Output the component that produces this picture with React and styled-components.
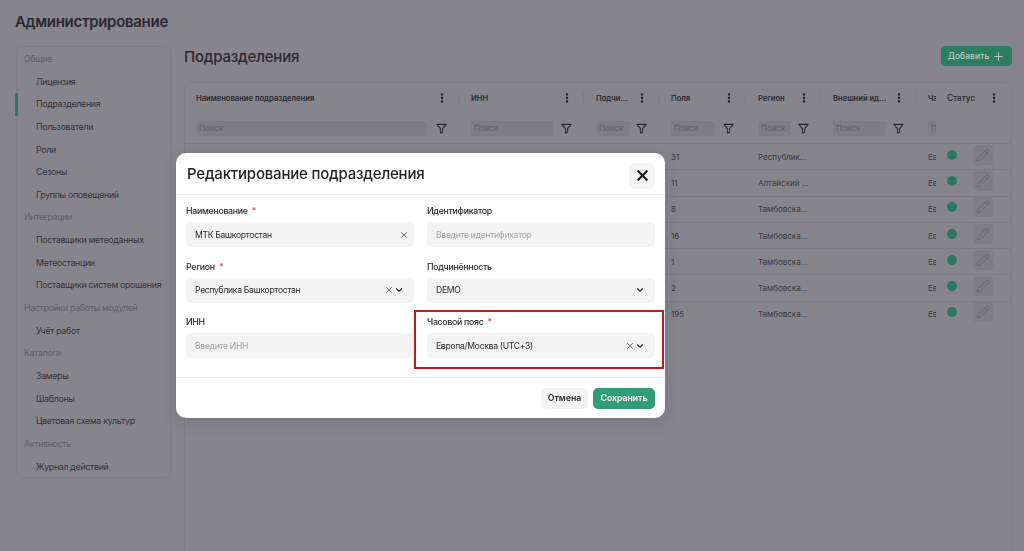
import styled, { createGlobalStyle } from "styled-components";
import { X, ChevronDown, Plus, Pencil, EllipsisVertical } from "lucide-react";

const GlobalStyle = createGlobalStyle`
  html, body { margin: 0; padding: 0; height: 100%; background: #fff; overflow: hidden; }
  body { font-family: Inter, "Noto Sans", sans-serif; color: #444448; }
  * { box-sizing: border-box; }
`;

const menu = [
  { title: "Общие", items: ["Лицензия", "Подразделения", "Пользователи", "Роли", "Сезоны", "Группы оповещений"] },
  { title: "Интеграции", items: ["Поставщики метеоданных", "Метеостанции", "Поставщики систем орошения"] },
  { title: "Настройки работы модулей", items: ["Учёт работ"] },
  { title: "Каталоги", items: ["Замеры", "Шаблоны", "Цветовая схема культур"] },
  { title: "Активность", items: ["Журнал действий"] },
];

const columns = [
  { name: "Наименование подразделения", width: 274, input: 231, first: true },
  { name: "ИНН", width: 125, input: 82 },
  { name: "Подчи...", width: 75, input: 33 },
  { name: "Поля", width: 87, input: 44 },
  { name: "Регион", width: 75, input: 32 },
  { name: "Внешний ид...", width: 95, input: 52 },
];

const rows = [
  ["31", "Республик..."],
  ["11", "Алтайский ..."],
  ["8", "Тамбовска..."],
  ["16", "Тамбовска..."],
  ["1", "Тамбовска..."],
  ["2", "Тамбовска..."],
  ["195", "Тамбовска..."],
];

const FilterIcon = () => (
  <svg width="11" height="11" viewBox="0 0 12 12" fill="none" stroke="#3a3a3e" strokeWidth="1.1" strokeLinejoin="round">
    <path d="M1 1.5h10L7.2 6.2v3.9L4.8 11V6.2z" />
  </svg>
);

const App = () => {
  return (
    <>
      <GlobalStyle />
      <Page>
        <PageTitle>Администрирование</PageTitle>
        <Columns>
          <Sidebar>
            {menu.map((group) => (
              <div key={group.title}>
                <GroupTitle>{group.title}</GroupTitle>
                {group.items.map((item) => (
                  <MenuItem key={item} $active={item === "Подразделения"}>
                    {item}
                  </MenuItem>
                ))}
              </div>
            ))}
          </Sidebar>
          <Main>
            <MainHeader>
              <MainTitle>Подразделения</MainTitle>
              <AddButton>
                Добавить <Plus size={13} strokeWidth={1.8} />
              </AddButton>
            </MainHeader>
            <TableCard>
              <HeadRow>
                {columns.map((col) => (
                  <HeadCell key={col.name} $width={col.width} $first={col.first}>
                    <HeadName>{col.name}</HeadName>
                    <Dots size={12} strokeWidth={2.8} />
                  </HeadCell>
                ))}
                <ClippedHead>Ча</ClippedHead>
                <StatusHead>
                  Статус
                  <Dots size={12} strokeWidth={2.8} />
                </StatusHead>
              </HeadRow>
              <FilterRow>
                {columns.map((col) => (
                  <FilterCell key={col.name} $width={col.width} $first={col.first}>
                    <SearchBox $width={col.input}>Поиск</SearchBox>
                    <FilterIcon />
                  </FilterCell>
                ))}
                <ClippedFilter>
                  <SearchBox $width={8}>П</SearchBox>
                </ClippedFilter>
              </FilterRow>
              {rows.map((row, i) => (
                <Row key={i}>
                  <RowSpacer />
                  <FieldsCell>{row[0]}</FieldsCell>
                  <RegionCell>{row[1]}</RegionCell>
                  <ClippedCell>Ев</ClippedCell>
                  <StatusCell>
                    <Dot />
                    <EditButton>
                      <Pencil size={14} strokeWidth={1} />
                    </EditButton>
                  </StatusCell>
                </Row>
              ))}
            </TableCard>
          </Main>
        </Columns>
      </Page>

      <Overlay>
        <Modal>
          <ModalHeader>
            <ModalTitle>Редактирование подразделения</ModalTitle>
            <CloseButton>
              <X size={17} strokeWidth={3} />
            </CloseButton>
          </ModalHeader>
          <Form>
            <Field>
              <Label>
                Наименование <Star>*</Star>
              </Label>
              <Control>
                <Value>МТК Башкортостан</Value>
                <ClearIcon size={10} strokeWidth={1.6} $alone />
              </Control>
            </Field>
            <Field>
              <Label>Идентификатор</Label>
              <Control>
                <Value $placeholder>Введите идентификатор</Value>
              </Control>
            </Field>
            <Field>
              <Label>
                Регион <Star>*</Star>
              </Label>
              <Control>
                <Value>Республика Башкортостан</Value>
                <ClearIcon size={10} strokeWidth={1.6} />
                <ChevronDown size={10} strokeWidth={2.6} />
              </Control>
            </Field>
            <Field>
              <Label>Подчинённость</Label>
              <Control>
                <Value>DEMO</Value>
                <ChevronDown size={10} strokeWidth={2.6} />
              </Control>
            </Field>
            <Field>
              <Label>ИНН</Label>
              <Control>
                <Value $placeholder>Введите ИНН</Value>
              </Control>
            </Field>
            <Field>
              <Label>
                Часовой пояс <Star>*</Star>
              </Label>
              <Control>
                <Value>Европа/Москва (UTC+3)</Value>
                <ClearIcon size={10} strokeWidth={1.6} />
                <ChevronDown size={10} strokeWidth={2.6} />
              </Control>
              <Highlight />
            </Field>
          </Form>
          <ModalFooter>
            <CancelButton>Отмена</CancelButton>
            <SaveButton>Сохранить</SaveButton>
          </ModalFooter>
        </Modal>
      </Overlay>
    </>
  );
};

const Page = styled.div`
  width: 1024px;
  height: 551px;
  padding: 12px 12px 0 16px;
  background: #fff;
  overflow: hidden;
`;
const PageTitle = styled.h1`
  margin: 0 0 15px -1px;
  font-size: 15px;
  line-height: 19px;
  font-weight: 600;
  letter-spacing: -0.3px;
`;
const Columns = styled.div`
  display: flex;
  gap: 13px;
`;
const Sidebar = styled.aside`
  width: 155px;
  height: 432px;
  padding: 1px 0 0;
  border: 1px solid #f0f0f1;
  border-radius: 6px;
  flex-shrink: 0;
`;
const GroupTitle = styled.div`
  height: 22.65px;
  line-height: 22.65px;
  padding-left: 7px;
  font-size: 8.8px;
  letter-spacing: -0.3px;
  color: #b0b0b4;
`;
const MenuItem = styled.div`
  position: relative;
  height: 22.65px;
  line-height: 22.65px;
  padding-left: 19px;
  font-size: 8.8px;
  letter-spacing: -0.3px;
  color: #58585c;
  white-space: nowrap;
  &::before {
    content: "";
    display: ${({ $active }) => ($active ? "block" : "none")};
    position: absolute;
    left: -2px;
    top: 0;
    width: 3px;
    height: 100%;
    background: #45e5a2;
  }
`;
const Main = styled.main`
  flex: 1;
  min-width: 0;
`;
const MainHeader = styled.div`
  display: flex;
  justify-content: space-between;
  align-items: flex-start;
  height: 36px;
`;
const MainTitle = styled.h2`
  margin: 0;
  font-size: 15px;
  line-height: 21px;
  font-weight: 500;
  letter-spacing: -0.2px;
`;
const AddButton = styled.button`
  position: relative;
  z-index: 2;
  display: flex;
  align-items: center;
  justify-content: center;
  gap: 3px;
  width: 71px;
  height: 20px;
  padding: 0;
  border: 0;
  border-radius: 4px;
  background: #2d7d60;
  color: #b7cbc2;
  font: 500 8.6px Inter, sans-serif;
`;
const TableCard = styled.section`
  height: 480px;
  border: 1px solid #f0f0f1;
  border-radius: 6px;
  overflow: hidden;
`;
const HeadRow = styled.div`
  display: flex;
  align-items: center;
  height: 30px;
`;
const HeadCell = styled.div`
  display: flex;
  align-items: center;
  justify-content: space-between;
  flex-shrink: 0;
  width: ${({ $width }) => $width}px;
  padding: 0 10.5px 0 ${({ $first }) => ($first ? 11 : 12)}px;
  height: 10px;
  border-right: 1px solid #eeeeef;
`;
const HeadName = styled.span`
  font-size: 7.6px;
  font-weight: 600;
  white-space: nowrap;
`;
const Dots = styled(EllipsisVertical)`
  color: #2a2a2e;
  flex-shrink: 0;
`;
const ClippedHead = styled.div`
  width: 20px;
  padding-left: 12px;
  font-size: 7.6px;
  font-weight: 600;
  overflow: hidden;
  flex-shrink: 0;
`;
const StatusHead = styled.div`
  display: flex;
  align-items: center;
  justify-content: space-between;
  flex: 1;
  padding: 0 11px 0 11px;
  font-size: 8.3px;
  font-weight: 500;
`;
const FilterRow = styled.div`
  display: flex;
  align-items: center;
  height: 30px;
`;
const FilterCell = styled.div`
  display: flex;
  align-items: center;
  justify-content: space-between;
  flex-shrink: 0;
  width: ${({ $width }) => $width}px;
  padding: 0 12px 0 ${({ $first }) => ($first ? 11 : 12)}px;
`;
const SearchBox = styled.div`
  width: ${({ $width }) => $width}px;
  height: 15px;
  line-height: 15px;
  padding-left: 3px;
  border-radius: 2px;
  background: #eeeeef;
  color: #b0b0b4;
  font-size: 8px;
  overflow: hidden;
  flex-shrink: 0;
`;
const ClippedFilter = styled.div`
  padding-left: 12px;
  flex-shrink: 0;
`;
const Row = styled.div`
  display: flex;
  align-items: center;
  height: 26.3px;
  border-top: 1px solid #eeeeef;
  font-size: 8px;
  color: #66666a;
`;
const RowSpacer = styled.div`
  width: 474px;
  flex-shrink: 0;
`;
const FieldsCell = styled.div`
  width: 87px;
  padding-left: 12px;
  flex-shrink: 0;
`;
const RegionCell = styled.div`
  width: 170px;
  padding-left: 12px;
  flex-shrink: 0;
`;
const ClippedCell = styled.div`
  width: 20px;
  padding-left: 12px;
  overflow: hidden;
  white-space: nowrap;
  flex-shrink: 0;
`;
const StatusCell = styled.div`
  display: flex;
  align-items: center;
  gap: 16px;
  padding-left: 11px;
  margin-top: -4px;
`;
const Dot = styled.span`
  width: 10px;
  height: 10px;
  border-radius: 50%;
  background: #45e5a2;
`;
const EditButton = styled.span`
  display: flex;
  align-items: center;
  justify-content: center;
  width: 20px;
  height: 20px;
  border-radius: 4px;
  background: #eeeeef;
  color: #a4a4aa;
`;
const Overlay = styled.div`
  position: fixed;
  inset: 0;
  z-index: 1;
  padding: 153px 0 0 176px;
  background: rgba(15, 12, 25, 0.5);
`;
const Modal = styled.div`
  display: flex;
  flex-direction: column;
  width: 489px;
  height: 265px;
  border-radius: 10px;
  background: #fff;
  box-shadow: 0 4px 18px rgba(0, 0, 0, 0.12);
`;
const ModalHeader = styled.header`
  display: flex;
  align-items: center;
  justify-content: space-between;
  height: 42px;
  padding: 0 10px 0 11px;
  border-bottom: 1px solid #f1f1f2;
`;
const ModalTitle = styled.h3`
  margin: 0;
  font-size: 15px;
  font-weight: 500;
  letter-spacing: -0.2px;
  color: #1f1f24;
`;
const CloseButton = styled.button`
  display: flex;
  align-items: center;
  justify-content: center;
  width: 26px;
  height: 26px;
  margin-top: 4px;
  padding: 0;
  border: 0;
  border-radius: 7px;
  background: #f4f4f5;
  color: #1a1a1e;
`;
const Form = styled.div`
  display: grid;
  grid-template-columns: 228px 228px;
  grid-auto-rows: 48px;
  align-content: start;
  column-gap: 13px;
  row-gap: 7.5px;
  padding: 4px 10px 0;
  height: 183px;
  border-bottom: 1px solid #f1f1f2;
`;
const Field = styled.div`
  position: relative;
`;
const Label = styled.div`
  height: 23px;
  line-height: 23px;
  font-size: 8.8px;
  font-weight: 500;
  letter-spacing: -0.3px;
  color: #2a2a2e;
`;
const Star = styled.span`
  color: #e5484d;
  margin-left: 2px;
`;
const Control = styled.div`
  display: flex;
  align-items: center;
  height: 25px;
  padding: 0 10.5px 0 9px;
  border-radius: 5px;
  background: #f3f3f4;
  color: #2a2a2e;
`;
const Value = styled.span`
  flex: 1;
  font-size: 8.6px;
  letter-spacing: -0.3px;
  color: ${({ $placeholder }) => ($placeholder ? "#a3a3a7" : "#2a2a2e")};
`;
const ClearIcon = styled(X)`
  margin-right: ${({ $alone }) => ($alone ? -5 : 0)}px;
`;
const Highlight = styled.div`
  position: absolute;
  left: -13px;
  right: -9px;
  top: 0;
  bottom: -11px;
  border: 2px solid #c4161c;
`;
const ModalFooter = styled.footer`
  display: flex;
  justify-content: flex-end;
  align-items: center;
  gap: 5px;
  flex: 1;
  padding: 0 10px;
`;
const CancelButton = styled.button`
  width: 47px;
  height: 21px;
  padding: 0;
  border: 0;
  border-radius: 5px;
  background: #f4f4f5;
  color: #2a2a2e;
  font: 600 8.7px Inter, sans-serif;
`;
const SaveButton = styled(CancelButton)`
  width: 62px;
  background: #2f9e77;
  color: #fff;
`;

export default App;
